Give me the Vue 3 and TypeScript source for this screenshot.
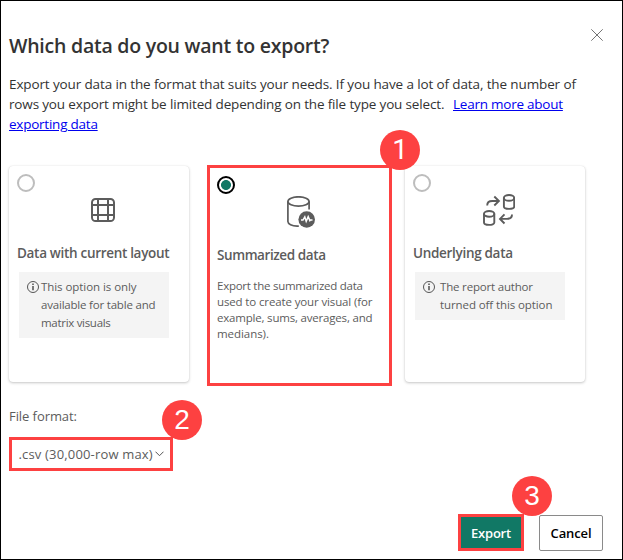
<script setup lang="ts">
import { ref } from 'vue'

interface Line { text: string; ls: number }
interface Option {
  id: string
  title: Line
  lines: Line[]
  notice: boolean
}

const selected = ref('summarized')
const options: Option[] = [
  {
    id: 'layout',
    title: { text: 'Data with current layout', ls: -0.31 },
    notice: true,
    lines: [
      { text: 'This option is only', ls: -0.06 },
      { text: 'available for table and', ls: -0.2 },
      { text: 'matrix visuals', ls: -0.3 },
    ],
  },
  {
    id: 'summarized',
    title: { text: 'Summarized data', ls: -0.41 },
    notice: false,
    lines: [
      { text: 'Export the summarized data', ls: -0.256 },
      { text: 'used to create your visual (for', ls: -0.13 },
      { text: 'example, sums, averages, and', ls: -0.195 },
      { text: 'medians).', ls: -0.06 },
    ],
  },
  {
    id: 'underlying',
    title: { text: 'Underlying data', ls: -0.31 },
    notice: true,
    lines: [
      { text: 'The report author', ls: -0.18 },
      { text: 'turned off this option', ls: -0.095 },
    ],
  },
]
const spacing = (l: Line) => ({ letterSpacing: l.ls + 'px' })
</script>

<template>
  <div class="dialog">
    <header class="head">
      <h1>Which data do you want to export?</h1>
      <button class="close" aria-label="Close">
        <svg width="12" height="12" viewBox="0 0 12 12"><path d="M.3.3l11.4 11.4M11.7.3L.3 11.7" stroke="#5a5a5a" stroke-width=".85" /></svg>
      </button>
    </header>

    <div class="intro">
      <div class="l1">Export your data in the format that suits your needs. If you have a lot of data, the number of</div>
      <div class="l2"><span>rows you export might be limited depending on the file type you select.</span><a href="#">Learn more about</a></div>
      <div><a href="#">exporting data</a></div>
    </div>

    <div class="cards">
      <section
        v-for="o in options"
        :key="o.id"
        class="card"
        :class="[o.id, { selected: selected === o.id }]"
        @click="selected = o.id"
      >
        <span class="radio"></span>
        <div class="icon">
          <svg v-if="o.id === 'layout'" width="24" height="24" viewBox="0 0 24 24" fill="none" stroke="#5c5c5c" stroke-width="2">
            <rect x="1" y="1" width="22" height="22" rx="3.6" />
            <path d="M7 1v22M17 1v22M1 7h22M1 17h22" />
          </svg>
          <svg v-else-if="o.id === 'summarized'" width="28" height="32" viewBox="0 0 28 32" fill="none" stroke="#5c5c5c" stroke-width="1.7">
            <ellipse cx="11.5" cy="5.5" rx="10.6" ry="4.7" />
            <path d="M.9 5.5v20c0 2.400 4 4.400 9.300 4.700h1.600M22.100 5.500v8" />
            <circle cx="19.7" cy="23.5" r="8.3" fill="#5c5c5c" stroke="none" />
            <path d="M14 24h2l1.800-3.200 1.400 4.600 2-4.800 1.700 4 .6-.6h2" stroke="#fff" stroke-width="1.5" />
          </svg>
          <svg v-else width="32" height="32" viewBox="0 0 32 32" fill="none" stroke="#5c5c5c" stroke-width="1.9">
            <path d="M20.900 3.500v9c0 3.200 10.300 3.200 10.300 0v-9" />
            <ellipse cx="26.050" cy="3.900" rx="5.150" ry="2.900" />
            <path d="M1 19.500v9c0 3.200 10.300 3.200 10.300 0v-9" />
            <ellipse cx="6.150" cy="19.900" rx="5.150" ry="2.900" />
            <path d="M4.200 11.400C4.200 8.600 6 7 9.300 7H15.500M11.300 2.500L15.900 7l-4.600 4.500" />
            <path d="M29 20.500c0 2.800-2 4.400-5 4.400h-6M21.500 20.300L17 24.900l4.500 4.600" />
          </svg>
        </div>
        <h2 :style="spacing(o.title)">{{ o.title.text }}</h2>
        <div :class="o.notice ? 'notice' : 'desc'">
          <svg v-if="o.notice" class="info" width="12" height="12" viewBox="0 0 12 12">
            <circle cx="6" cy="6" r="5.5" fill="none" stroke="#555" />
            <path d="M6 5v4.200M6 2.600v1.500" stroke="#444" stroke-width="1.400" />
          </svg>
          <div>
            <div v-for="l in o.lines" :key="l.text" class="line" :style="spacing(l)">{{ l.text }}</div>
          </div>
        </div>
      </section>
      <span class="step one">1</span>
    </div>

    <div class="format">
      <label>File format:</label>
      <div class="select">
        <span>.csv (30,000-row max)</span>
        <svg width="9" height="6" viewBox="0 0 9 6"><path d="M.5.700L4.500 4.700 8.500.700" fill="none" stroke="#555" /></svg>
        <b class="step two">2</b>
      </div>
    </div>

    <footer class="actions">
      <div class="primary-wrap">
        <button class="primary">Export</button>
        <span class="step three">3</span>
      </div>
      <button class="secondary">Cancel</button>
    </footer>
  </div>
</template>

<style>
body { margin: 0; background: #fff; }
</style>
<style scoped>
* { box-sizing: border-box; }
.dialog {
  width: 623px; height: 560px; border: 1px solid #000; background: #fff;
  padding: 0 8px; font-family: "Open Sans", "Noto Sans", sans-serif; color: #333;
  display: flex; flex-direction: column; overflow: hidden;
}
.head { display: flex; justify-content: space-between; align-items: flex-start; height: 73px; padding-top: 28px; }
h1 { margin: 3px 0 0; font-size: 19.5px; line-height: 28px; font-weight: 600; letter-spacing: -.235px; white-space: nowrap; }
button { font-family: inherit; padding: 0; }
.close { border: 0; background: none; width: 12px; height: 12px; margin-right: 11px; display: flex; }
.intro { font-size: 13.5px; line-height: 20px; height: 60px; white-space: nowrap; }
.l1 { letter-spacing: -.125px; }
.l2 { display: flex; }
.l2 span { width: 444px; letter-spacing: -.155px; }
a { color: #0000ee; letter-spacing: -.235px; text-decoration: underline; }
.cards { position: relative; display: flex; align-items: flex-start; margin-top: 31px; height: 221px; }
.card {
  width: 180px; height: 216px; margin-top: 1px; padding: 8px; border-radius: 4px; background: #fff;
  box-shadow: 0 1px 3px rgba(0,0,0,.22), 0 0 1px rgba(0,0,0,.12); color: #5c5c5c; white-space: nowrap;
}
.card.summarized { width: 185px; height: 221px; margin: 0 13px 0 18px; padding: 8px 7px; border: 3px solid #fd4141; border-radius: 0; box-shadow: none; }
.radio { display: block; width: 18px; height: 18px; border: 2px solid #bdbdbd; border-radius: 50%; }
.selected .radio { border-color: #000; background: radial-gradient(circle, #117865 4.600px, #fff 5.300px); }
.icon { display: flex; padding-left: 74px; height: 51px; padding-top: 6px; }
.summarized .icon { padding-left: 70px; padding-top: 2px; }
.underlying .icon { padding-top: 2px; padding-left: 70px; }
h2 { margin: 0; font-size: 13.5px; line-height: 20px; font-weight: 600; }
.notice { display: flex; width: 150px; margin: 9px 0 0 2px; padding: 6px 8px; background: #f4f4f4; font-size: 11.5px; line-height: 18px; }
.info { margin: 3px 2px 0 0; flex: none; }
.underlying .info { margin-right: 5px; }
.desc { margin-top: 13px; font-size: 11.5px; line-height: 16px; }
.step {
  position: absolute; width: 40px; height: 40px; border-radius: 50%; background: #fd4141; color: #fff;
  font: 28px/40px "Liberation Sans", Arial, sans-serif; text-align: center; letter-spacing: 0;
}
.one { left: 371px; top: -35px; font-family: Roboto, sans-serif; }
.format { margin-top: 20px; font-size: 13px; line-height: 20px; color: #5c5c5c; }
.format label { display: block; letter-spacing: -.07px; }
.select {
  position: relative; display: flex; align-items: center; width: 164px; height: 34px; margin-top: 11px;
  padding-left: 6.5px; border: 3px solid #fd4141; white-space: nowrap;
}
.select span { width: 136px; letter-spacing: .17px; }
.two { left: 150px; top: -40px; }
.actions { display: flex; justify-content: flex-end; gap: 15px; margin: 43px 11px 0 0; height: 37px; }
.primary-wrap { position: relative; width: 66px; height: 37px; }
.primary { width: 66px; height: 37px; border: 3px solid #fd4141; background: #117865; color: #fff; font-size: 13px; font-weight: 600; letter-spacing: -.24px; }
.three { left: 54px; top: -38px; }
.secondary { width: 64px; height: 36px; margin-top: 1px; border: 1px solid #8a8a8a; border-radius: 2px; background: #fff; color: #000; font-size: 13px; font-weight: 600; letter-spacing: -.12px; }
</style>
